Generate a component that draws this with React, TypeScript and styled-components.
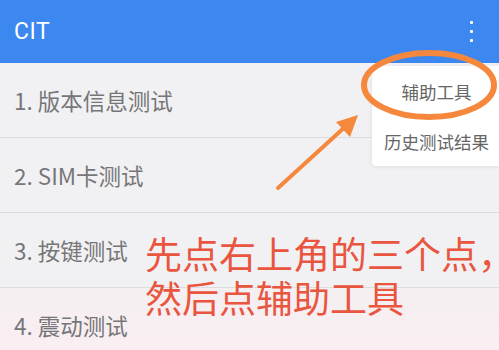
import * as React from 'react'
import styled, { createGlobalStyle } from 'styled-components'

const items = ['1. 版本信息测试', '2. SIM卡测试', '3. 按键测试', '4. 震动测试']
const menu = ['辅助工具', '历史测试结果']

const GlobalStyle = createGlobalStyle`
  html, body {
    margin: 0;
    padding: 0;
    overflow: hidden;
    font-family: Roboto, "Noto Sans CJK SC", "Noto Sans", sans-serif;
  }
`

const App: React.FC = () => {
  return (
    <Screen>
      <GlobalStyle />
      <AppBar>
        <Title>CIT</Title>
        <Kebab>
          <Dot />
          <Dot />
          <Dot />
        </Kebab>
      </AppBar>
      <List>
        {items.map((label, i) => (
          <Row key={label} last={i === items.length - 1}>
            {label}
          </Row>
        ))}
      </List>
      <Popup>
        {menu.map((label) => (
          <PopupItem key={label}>{label}</PopupItem>
        ))}
      </Popup>
      <Marks viewBox="0 0 499 350" width="499" height="350">
        <ellipse
          cx="429"
          cy="85"
          rx="65"
          ry="32"
          fill="none"
          stroke="#f5883c"
          strokeWidth="6"
        />
        <line
          x1="278"
          y1="188"
          x2="346"
          y2="126"
          stroke="#f5883c"
          strokeWidth="4"
          strokeLinecap="round"
        />
        <polygon points="358,115 350,137 336,122" fill="#f5883c" />
      </Marks>
      <Callout>
        先点右上角的三个点，
        <br />
        然后点辅助工具
      </Callout>
    </Screen>
  )
}

const Screen = styled.div`
  position: relative;
  width: 499px;
  height: 350px;
  overflow: hidden;
  background: #f1f1f3;
`

const AppBar = styled.header`
  display: flex;
  align-items: center;
  justify-content: space-between;
  height: 63px;
  padding: 0 26px 0 14px;
  background: #3d87f0;
  color: #fff;
`

const Title = styled.h1`
  margin: 0;
  font-size: 23px;
  font-weight: 400;
  letter-spacing: 0.5px;
`

const Kebab = styled.div`
  display: flex;
  flex-direction: column;
  gap: 6px;
  margin-top: -1px;
`

const Dot = styled.span`
  display: block;
  width: 3px;
  height: 3px;
  border-radius: 1px;
  background: #fff;
`

const List = styled.ul`
  margin: 0;
  padding: 0;
  list-style: none;
`

const Row = styled.li<{ last?: boolean }>`
  display: flex;
  align-items: center;
  height: 74px;
  padding-left: 14px;
  border-bottom: 1px solid #dddde0;
  font-family: "Noto Sans CJK SC", sans-serif;
  font-size: 22.5px;
  color: #767678;
  background: ${(p) =>
    p.last ? 'linear-gradient(#f4eff1, #fbeef2)' : 'transparent'};
`

const Popup = styled.div`
  position: absolute;
  top: 66px;
  right: 0;
  width: 127px;
  background: #fff;
  border-radius: 4px 0 0 4px;
  box-shadow: 0 1px 4px rgba(0, 0, 0, 0.08);
`

const PopupItem = styled.div`
  display: flex;
  align-items: center;
  justify-content: center;
  height: 50px;
  padding-left: 2px;
  font-family: "Noto Sans CJK SC", sans-serif;
  font-size: 17.5px;
  color: #666;
`

const Marks = styled.svg`
  position: absolute;
  top: 0;
  left: 0;
  pointer-events: none;
`

const Callout = styled.div`
  position: absolute;
  left: 145px;
  top: 231px;
  font-family: "Noto Sans CJK SC", sans-serif;
  font-size: 37px;
  line-height: 44px;
  color: #e9553f;
  white-space: nowrap;
`

export default App
